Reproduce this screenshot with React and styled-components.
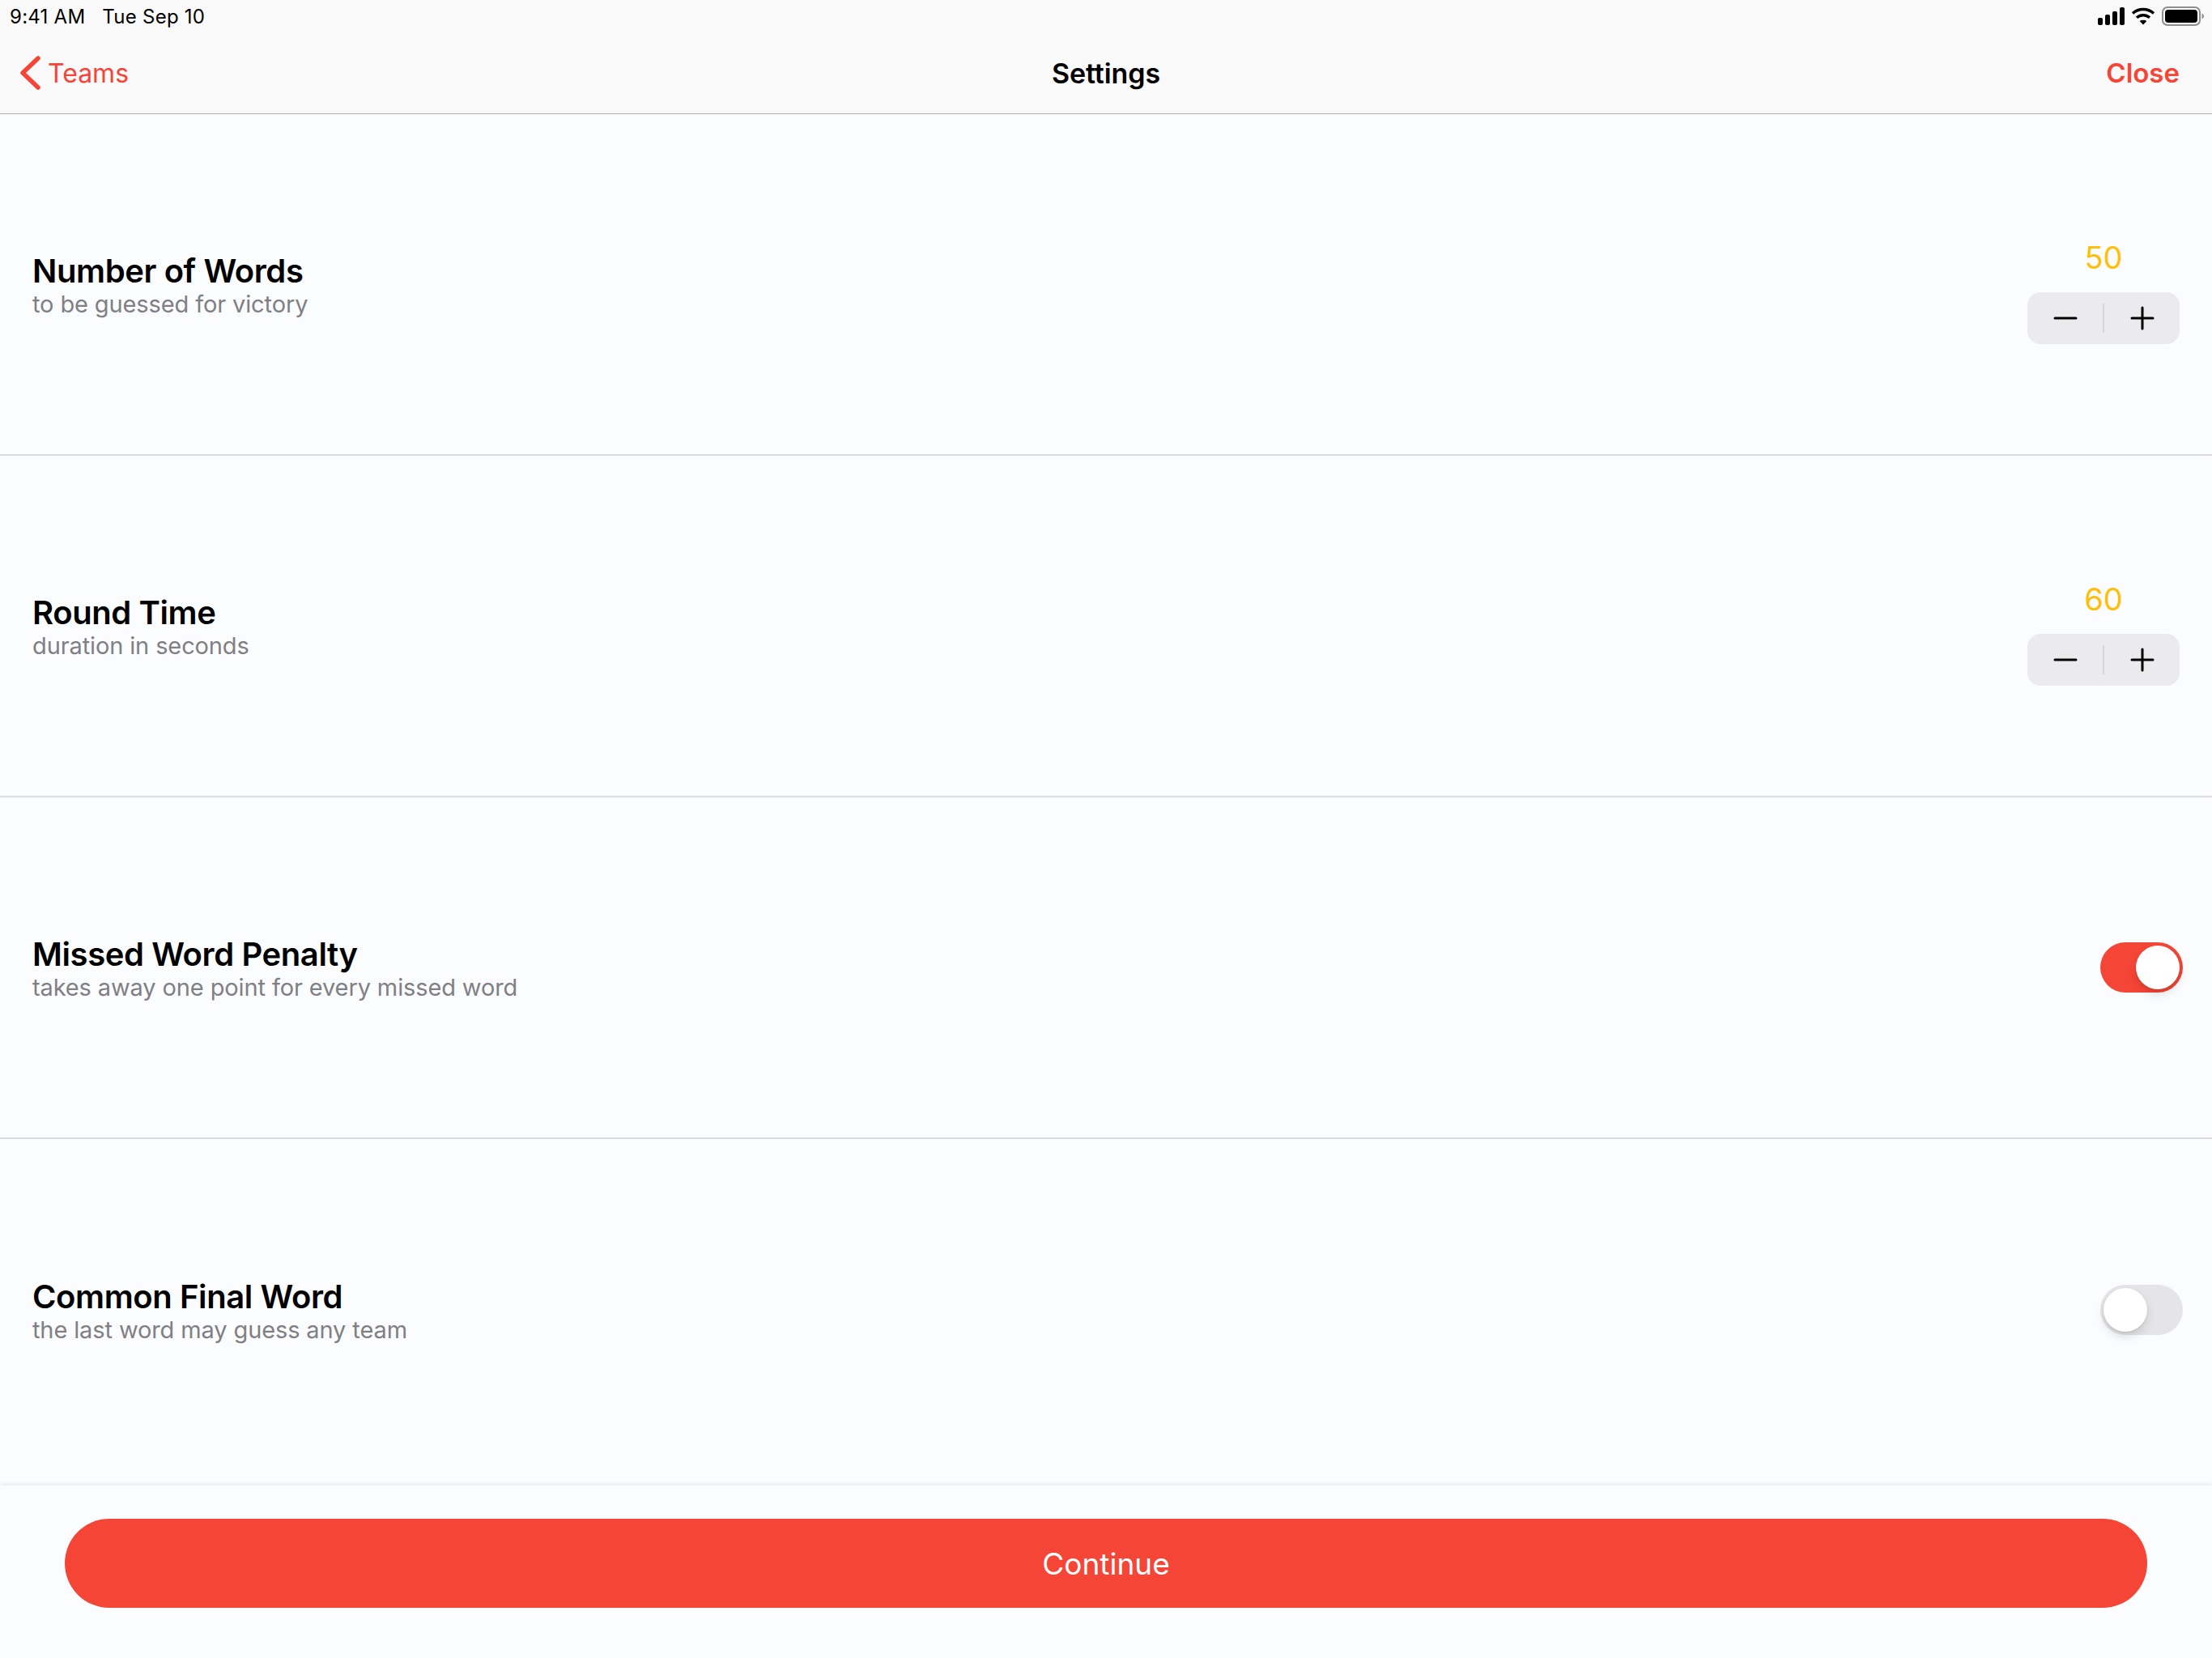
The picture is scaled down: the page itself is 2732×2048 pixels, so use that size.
import React from "react";
import styled, { createGlobalStyle } from "styled-components";

const Global = createGlobalStyle`
  html, body { margin: 0; padding: 0; background: #fbfcfe; }
  body { font-family: Inter, "Liberation Sans", sans-serif; -webkit-font-smoothing: antialiased; }
`;
const Page = styled.div`
  width: 2732px; height: 2048px; display: flex; flex-direction: column; background: #fbfcfe; overflow: hidden;
`;
const Header = styled.header`
  height: 140px; flex: none; box-sizing: content-box; background: #f9f9f9; border-bottom: 1px solid #b0b0b0;
  display: flex; flex-direction: column;
`;
const StatusBar = styled.div`
  height: 40px; display: flex; align-items: center; justify-content: space-between; padding: 0 10px 0 12px;
  font-size: 24px; color: #000; letter-spacing: 0.25px;
`;
const StatusLeft = styled.div` display: flex; gap: 21px; `;
const StatusRight = styled.div` display: flex; align-items: center; gap: 8px; `;
const Nav = styled.nav`
  flex: 1; display: grid; grid-template-columns: 1fr auto 1fr; align-items: center; padding: 0 40px;
`;
const Back = styled.div`
  display: flex; align-items: center; gap: 9px; margin-left: -16px; color: #f54537; font-size: 32px;
`;
const Title = styled.div` font-size: 34px; font-weight: 600; color: #000; letter-spacing: -0.1px; `;
const Close = styled.div` justify-self: end; font-size: 33px; font-weight: 600; color: #f54537; `;
const List = styled.main` flex: 1; display: flex; flex-direction: column; `;
const Row = styled.section`
  height: 422px; flex: none; box-sizing: border-box; border-bottom: ${p => (p.$last ? "none" : "2px solid #dcdcde")};
  display: flex; align-items: center; justify-content: space-between; padding: 4px 36px 0 40px;
`;
const Labels = styled.div` display: flex; flex-direction: column; `;
const Name = styled.div` font-size: 40px; font-weight: 600; color: #000; line-height: 46px; letter-spacing: -0.4px; `;
const Hint = styled.div` font-size: 29px; color: #808084; line-height: 36px; letter-spacing: -0.12px; `;
const StepperBox = styled.div`
  width: 188px; margin: 15px 4px 0 0; display: flex; flex-direction: column; align-items: center; gap: 21px;
`;
const Value = styled.div` font-size: 38px; line-height: 44px; color: #ffbe0a; `;
const Stepper = styled.div`
  width: 188px; height: 64px; border-radius: 16px; background: #ebebed; display: flex; align-items: center;
`;
const StepBtn = styled.div` flex: 1; display: flex; align-items: center; justify-content: center; `;
const Divider = styled.div` width: 2px; height: 36px; background: #d5d5d8; `;
const Track = styled.div`
  position: relative; width: 102px; height: 62px; border-radius: 31px; margin-bottom: 4px;
  background: ${p => (p.$on ? "#f54537" : "#e5e5e8")};
`;
const Knob = styled.div`
  position: absolute; top: 4px; left: ${p => (p.$on ? "44px" : "4px")}; width: 54px; height: 54px; border-radius: 50%;
  background: #fff; box-shadow: 0 6px 12px rgba(0,0,0,.12), 0 1px 2px rgba(0,0,0,.1);
`;
const Footer = styled.footer`
  height: 213px; margin-top: auto; box-sizing: border-box; padding: 41px 80px 0; background: #fbfcfe;
  box-shadow: 0 -2px 5px rgba(0,0,0,.08);
`;
const Button = styled.div`
  height: 110px; border-radius: 55px; background: #f54537; color: #fff; font-size: 37px;
  display: flex; align-items: center; justify-content: center;
`;

const Minus = () => (
  <svg width="30" height="30" viewBox="0 0 30 30"><path d="M2 15H28" stroke="#000" strokeWidth="3" strokeLinecap="round" /></svg>
);
const Plus = () => (
  <svg width="30" height="30" viewBox="0 0 30 30"><path d="M2 15H28M15 2V28" stroke="#000" strokeWidth="3" strokeLinecap="round" /></svg>
);
const Chevron = () => (
  <svg width="26" height="42" viewBox="0 0 26 42"><path d="M23 3L4 21L23 39" fill="none" stroke="#f54537" strokeWidth="5.5" strokeLinecap="round" strokeLinejoin="round" /></svg>
);
const Signal = () => (
  <svg width="33" height="22" viewBox="0 0 33 22">
    <rect x="0" y="13" width="6" height="9" rx="2" /><rect x="9" y="9" width="6" height="13" rx="2" />
    <rect x="18" y="5" width="6" height="17" rx="2" /><rect x="27" y="0" width="6" height="22" rx="2" />
  </svg>
);
const Wifi = () => (
  <svg width="30" height="22" viewBox="0 0 30 22" fill="none" stroke="#000" strokeWidth="3.4">
    <path d="M2 7.5C9.5 .8 20.5 .8 28 7.5" /><path d="M7 12.8C11.8 8.8 18.2 8.8 23 12.8" />
    <path d="M15 21.5L10.6 17C13.2 15.2 16.8 15.2 19.4 17Z" fill="#000" stroke="none" />
  </svg>
);
const Battery = () => (
  <svg width="52" height="24" viewBox="0 0 52 24">
    <rect x="1" y="1" width="46" height="22" rx="6" fill="none" stroke="#8e8e8e" strokeWidth="2" />
    <rect x="4" y="4" width="40" height="16" rx="4" fill="#000" />
    <path d="M49.5 8.5C51 9.2 52 10.5 52 12S51 14.8 49.5 15.5Z" fill="#8e8e8e" />
  </svg>
);

const StepperRow = ({ name, hint, value }) => (
  <Row>
    <Labels><Name>{name}</Name><Hint>{hint}</Hint></Labels>
    <StepperBox>
      <Value>{value}</Value>
      <Stepper>
        <StepBtn><Minus /></StepBtn>
        <Divider />
        <StepBtn><Plus /></StepBtn>
      </Stepper>
    </StepperBox>
  </Row>
);
const ToggleRow = ({ name, hint, on, last }) => (
  <Row $last={last}>
    <Labels><Name>{name}</Name><Hint>{hint}</Hint></Labels>
    <Track $on={on}><Knob $on={on} /></Track>
  </Row>
);

export default function App() {
  return (
    <Page>
      <Global />
      <Header>
        <StatusBar>
          <StatusLeft><span>9:41 AM</span><span>Tue Sep 10</span></StatusLeft>
          <StatusRight><Signal /><Wifi /><Battery /></StatusRight>
        </StatusBar>
        <Nav>
          <Back><Chevron />Teams</Back>
          <Title>Settings</Title>
          <Close>Close</Close>
        </Nav>
      </Header>
      <List>
        <StepperRow name="Number of Words" hint="to be guessed for victory" value="50" />
        <StepperRow name="Round Time" hint="duration in seconds" value="60" />
        <ToggleRow name="Missed Word Penalty" hint="takes away one point for every missed word" on />
        <ToggleRow name="Common Final Word" hint="the last word may guess any team" last />
        <Footer><Button>Continue</Button></Footer>
      </List>
    </Page>
  );
}
